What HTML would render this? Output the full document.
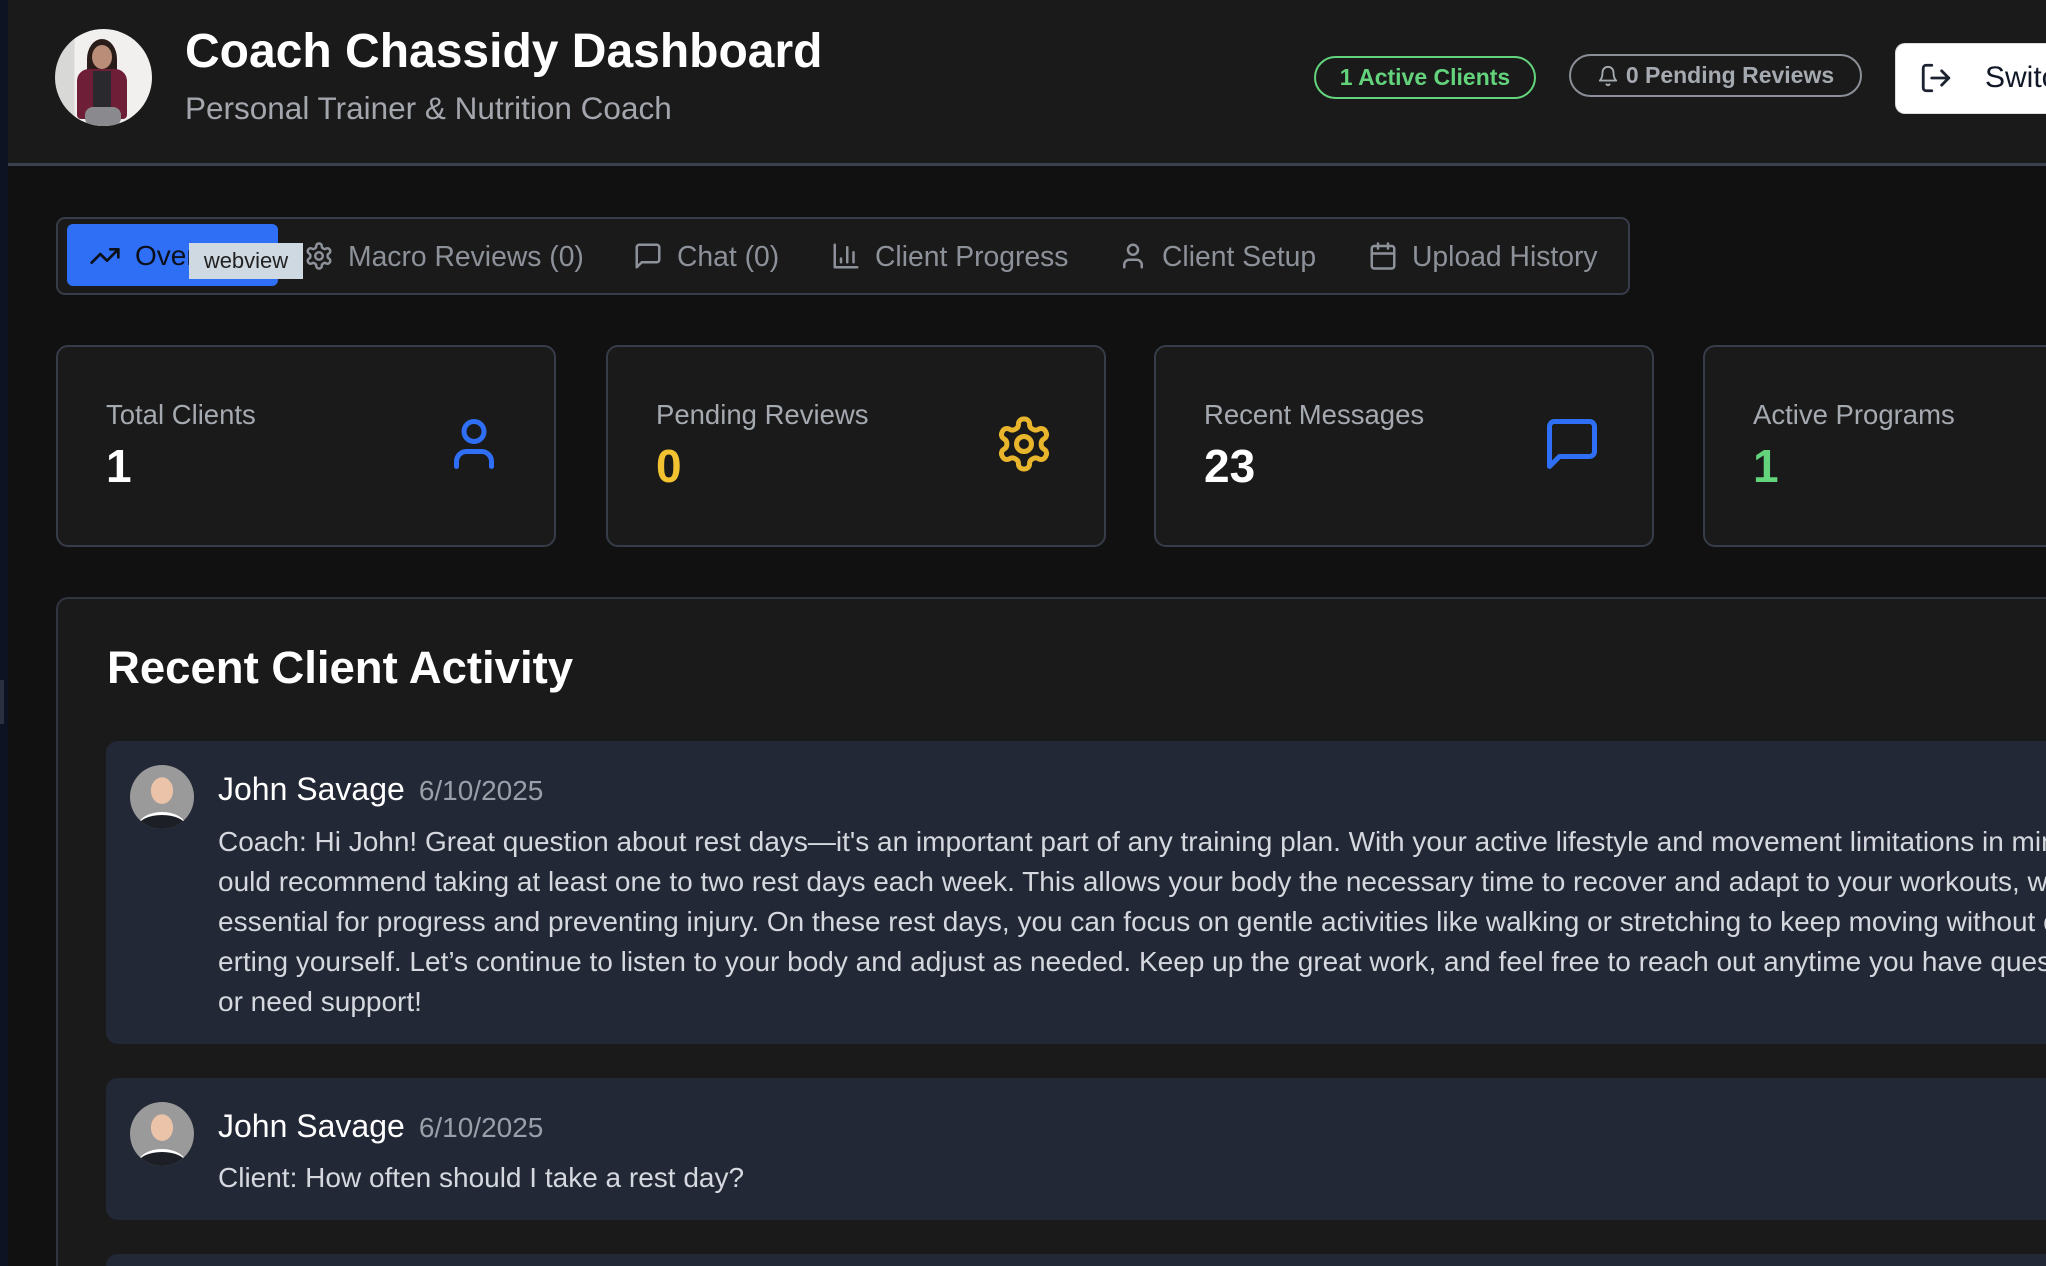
<!DOCTYPE html>
<html><head><meta charset="utf-8"><style>
*{box-sizing:border-box;margin:0;padding:0}
html,body{width:2046px;height:1266px;overflow:hidden;background:#111112;font-family:"Liberation Sans",Arial,sans-serif}
#w{position:relative;width:2046px;height:1266px;overflow:hidden}
.abs{position:absolute}
svg{display:block}
.hdr{left:8px;top:0;width:2038px;height:166px;background:#1a1a1a;border-bottom:3px solid #3a4250}
.tab{position:absolute;top:232px;height:48px;display:flex;align-items:center;font-size:28px;color:#8d9199;white-space:nowrap}
.tab svg{margin-right:14px}
.card{position:absolute;top:345px;width:500px;height:202px;background:#1a1a1a;border:2px solid #363c48;border-radius:12px}
.card .lbl{position:absolute;left:48px;top:52px;font-size:27.5px;color:#a5a9b0}
.card .num{position:absolute;left:48px;top:92px;font-size:46px;font-weight:bold}
.card svg{position:absolute;left:386px;top:67px}
.msg{position:absolute;left:106px;width:1940px;background:#222835;border-radius:12px 0 0 12px;overflow:hidden}
.av{position:absolute;left:24px;width:64px;height:64px;border-radius:50%;background:radial-gradient(ellipse at 50% 40%,#eac3a9 0 24%,#9a9a9a 25% 100%);overflow:hidden}
.av:after{content:"";position:absolute;left:8px;right:8px;bottom:-12px;height:26px;background:#1d1f26;border-radius:50% 50% 0 0;border-top:3px solid #fff}
.name{position:absolute;left:112px;font-size:32px;color:#fff;white-space:nowrap}
.date{font-size:28px;color:#9aa0a9;margin-left:14px}
.txt{position:absolute;left:112px;font-size:28px;line-height:40px;color:#d5d8de;white-space:nowrap}
</style></head><body><div id="w">
<div class="abs" style="left:0;top:0;width:8px;height:1266px;background:#0d1322"></div>
<div class="abs" style="left:0;top:680px;width:4px;height:44px;background:#2a3040"></div>
<div class="abs hdr"></div>
<div class="abs" style="left:55px;top:29px;width:97px;height:97px;border-radius:50%;background:linear-gradient(90deg,#d8d8d6 0 20%,#f2f0ee 20% 100%);overflow:hidden">
 <div class="abs" style="left:32px;top:10px;width:30px;height:40px;border-radius:50% 50% 0 0;background:#2a1c18"></div>
 <div class="abs" style="left:37px;top:16px;width:20px;height:24px;border-radius:50%;background:#b98d78"></div>
 <div class="abs" style="left:22px;top:40px;width:50px;height:50px;border-radius:12px 12px 4px 4px;background:#6e1e36"></div>
 <div class="abs" style="left:38px;top:42px;width:18px;height:38px;background:#2a2a2e"></div>
 <div class="abs" style="left:30px;top:78px;width:36px;height:19px;background:#8a8a8e;border-radius:8px"></div>
</div>
<div class="abs" style="left:185px;top:24px;font-size:48px;font-weight:bold;color:#fff">Coach Chassidy Dashboard</div>
<div class="abs" style="left:185px;top:90px;font-size:31.5px;color:#a3a6ad">Personal Trainer &amp; Nutrition Coach</div>
<div class="abs" style="left:1314px;top:56px;width:222px;height:43px;border:2px solid #63d37c;border-radius:22px;color:#63d37c;font-size:23px;font-weight:bold;display:flex;align-items:center;justify-content:center">1 Active Clients</div>
<div class="abs" style="left:1569px;top:54px;width:293px;height:43px;border:2px solid #8b8f97;border-radius:22px;color:#a5a9b0;font-size:23px;font-weight:bold;display:flex;align-items:center;justify-content:center"><svg width="22" height="22" viewBox="0 0 24 24" fill="none" stroke="#a5a9b0" stroke-width="2" stroke-linecap="round" stroke-linejoin="round" style="margin-right:7px"><path d="M6 8a6 6 0 0 1 12 0c0 7 3 9 3 9H3s3-2 3-9"/><path d="M10.3 21a1.94 1.94 0 0 0 3.4 0"/></svg>0 Pending Reviews</div>
<div class="abs" style="left:1895px;top:43px;width:151px;height:71px;background:#fff;border-radius:10px 0 0 10px;border:1px solid #ddd;border-right:none;overflow:hidden">
<svg class="abs" style="left:23px;top:17px" width="34" height="34" viewBox="0 0 24 24" fill="none" stroke="#1c2230" stroke-width="2" stroke-linecap="round" stroke-linejoin="round"><path d="M9 21H5a2 2 0 0 1-2-2V5a2 2 0 0 1 2-2h4"/><polyline points="16 17 21 12 16 7"/><line x1="21" y1="12" x2="9" y2="12"/></svg>
<div class="abs" style="left:89px;top:17px;font-size:30px;color:#111827;white-space:nowrap">Switch</div></div>

<div class="abs" style="left:56px;top:217px;width:1574px;height:78px;background:#1a1a1a;border:2px solid #363c48;border-radius:9px"></div>
<div class="abs" style="left:67px;top:224px;width:211px;height:62px;background:#2f6ff5;border-radius:6px"></div>
<div class="tab" style="left:89px;color:#0b0f1a"><svg width="32" height="32" viewBox="0 0 24 24" fill="none" stroke="#0b0f1a" stroke-width="2" stroke-linecap="round" stroke-linejoin="round"><polyline points="22 7 13.5 15.5 8.5 10.5 2 17"/><polyline points="16 7 22 7 22 13"/></svg>Overview</div>
<div class="tab" style="left:304px;font-size:28.3px"><svg width="30" height="30" viewBox="0 0 24 24" fill="none" stroke="#8d9199" stroke-width="2" stroke-linecap="round" stroke-linejoin="round"><path d="M12.22 2h-.44a2 2 0 0 0-2 2v.18a2 2 0 0 1-1 1.73l-.43.25a2 2 0 0 1-2 0l-.15-.08a2 2 0 0 0-2.73.73l-.22.38a2 2 0 0 0 .73 2.73l.15.1a2 2 0 0 1 1 1.72v.51a2 2 0 0 1-1 1.74l-.15.09a2 2 0 0 0-.73 2.73l.22.38a2 2 0 0 0 2.73.73l.15-.08a2 2 0 0 1 2 0l.43.25a2 2 0 0 1 1 1.73V20a2 2 0 0 0 2 2h.44a2 2 0 0 0 2-2v-.18a2 2 0 0 1 1-1.73l.43-.25a2 2 0 0 1 2 0l.15.08a2 2 0 0 0 2.73-.73l.22-.39a2 2 0 0 0-.73-2.73l-.15-.08a2 2 0 0 1-1-1.74v-.5a2 2 0 0 1 1-1.74l.15-.09a2 2 0 0 0 .73-2.73l-.22-.38a2 2 0 0 0-2.73-.73l-.15.08a2 2 0 0 1-2 0l-.43-.25a2 2 0 0 1-1-1.73V4a2 2 0 0 0-2-2z"/><circle cx="12" cy="12" r="3"/></svg>Macro Reviews (0)</div>
<div class="abs" style="left:189px;top:243px;width:114px;height:36px;background:#cfd9e2;color:#222;font-size:22px;display:flex;align-items:center;justify-content:center">webview</div>
<div class="tab" style="left:633px;font-size:28.3px"><svg width="30" height="30" viewBox="0 0 24 24" fill="none" stroke="#8d9199" stroke-width="2" stroke-linecap="round" stroke-linejoin="round"><path d="M21 15a2 2 0 0 1-2 2H7l-4 4V5a2 2 0 0 1 2-2h14a2 2 0 0 1 2 2z"/></svg>Chat (0)</div>
<div class="tab" style="left:831px;font-size:28.3px"><svg width="30" height="30" viewBox="0 0 24 24" fill="none" stroke="#8d9199" stroke-width="2" stroke-linecap="round" stroke-linejoin="round"><path d="M3 3v18h18"/><path d="M18 17V9"/><path d="M13 17V5"/><path d="M8 17v-3"/></svg>Client Progress</div>
<div class="tab" style="left:1118px;font-size:28.3px"><svg width="30" height="30" viewBox="0 0 24 24" fill="none" stroke="#8d9199" stroke-width="2" stroke-linecap="round" stroke-linejoin="round"><path d="M19 21v-2a4 4 0 0 0-4-4H9a4 4 0 0 0-4 4v2"/><circle cx="12" cy="7" r="4"/></svg>Client Setup</div>
<div class="tab" style="left:1368px;font-size:28.3px"><svg width="30" height="30" viewBox="0 0 24 24" fill="none" stroke="#8d9199" stroke-width="2" stroke-linecap="round" stroke-linejoin="round"><rect x="3" y="4" width="18" height="18" rx="2"/><path d="M16 2v4M8 2v4M3 10h18"/></svg>Upload History</div>

<div class="card" style="left:56px"><div class="lbl">Total Clients</div><div class="num" style="color:#fff">1</div>
<svg width="60" height="60" viewBox="0 0 24 24" fill="none" stroke="#2f6ff5" stroke-width="2" stroke-linecap="round" stroke-linejoin="round"><path d="M19 21v-2a4 4 0 0 0-4-4H9a4 4 0 0 0-4 4v2"/><circle cx="12" cy="7" r="4"/></svg></div>
<div class="card" style="left:606px"><div class="lbl">Pending Reviews</div><div class="num" style="color:#f2c230">0</div>
<svg width="60" height="60" viewBox="0 0 24 24" fill="none" stroke="#e8b52c" stroke-width="2" stroke-linecap="round" stroke-linejoin="round"><path d="M12.22 2h-.44a2 2 0 0 0-2 2v.18a2 2 0 0 1-1 1.73l-.43.25a2 2 0 0 1-2 0l-.15-.08a2 2 0 0 0-2.73.73l-.22.38a2 2 0 0 0 .73 2.73l.15.1a2 2 0 0 1 1 1.72v.51a2 2 0 0 1-1 1.74l-.15.09a2 2 0 0 0-.73 2.73l.22.38a2 2 0 0 0 2.73.73l.15-.08a2 2 0 0 1 2 0l.43.25a2 2 0 0 1 1 1.73V20a2 2 0 0 0 2 2h.44a2 2 0 0 0 2-2v-.18a2 2 0 0 1 1-1.73l.43-.25a2 2 0 0 1 2 0l.15.08a2 2 0 0 0 2.73-.73l.22-.39a2 2 0 0 0-.73-2.73l-.15-.08a2 2 0 0 1-1-1.74v-.5a2 2 0 0 1 1-1.74l.15-.09a2 2 0 0 0 .73-2.73l-.22-.38a2 2 0 0 0-2.73-.73l-.15.08a2 2 0 0 1-2 0l-.43-.25a2 2 0 0 1-1-1.73V4a2 2 0 0 0-2-2z"/><circle cx="12" cy="12" r="3"/></svg></div>
<div class="card" style="left:1154px"><div class="lbl">Recent Messages</div><div class="num" style="color:#fff">23</div>
<svg width="60" height="60" viewBox="0 0 24 24" fill="none" stroke="#2f6ff5" stroke-width="2" stroke-linecap="round" stroke-linejoin="round"><path d="M21 15a2 2 0 0 1-2 2H7l-4 4V5a2 2 0 0 1 2-2h14a2 2 0 0 1 2 2z"/></svg></div>
<div class="card" style="left:1703px;width:343px;border-right:none;border-radius:12px 0 0 12px"><div class="lbl">Active Programs</div><div class="num" style="color:#63d37c">1</div></div>

<div class="abs" style="left:56px;top:597px;width:1990px;height:669px;background:#1a1a1a;border:2px solid #30353f;border-right:none;border-bottom:none;border-radius:12px 0 0 0"></div>
<div class="abs" style="left:107px;top:642px;font-size:45.5px;font-weight:bold;color:#fff">Recent Client Activity</div>

<div class="msg" style="top:741px;height:303px">
 <div class="av" style="top:24px"></div>
 <div class="name" style="top:30px">John Savage<span class="date">6/10/2025</span></div>
 <div class="txt" style="top:81px">Coach: Hi John! Great question about rest days—it's an important part of any training plan. With your active lifestyle and movement limitations in mind, I w<br>ould recommend taking at least one to two rest days each week. This allows your body the necessary time to recover and adapt to your workouts, which is<br>essential for progress and preventing injury. On these rest days, you can focus on gentle activities like walking or stretching to keep moving without ov<br>erting yourself. Let’s continue to listen to your body and adjust as needed. Keep up the great work, and feel free to reach out anytime you have questions<br>or need support!</div>
</div>
<div class="msg" style="top:1078px;height:142px">
 <div class="av" style="top:24px"></div>
 <div class="name" style="top:30px">John Savage<span class="date">6/10/2025</span></div>
 <div class="txt" style="top:80px">Client: How often should I take a rest day?</div>
</div>
<div class="msg" style="top:1254px;height:12px;border-radius:12px 0 0 0"></div>
</div></body></html>
